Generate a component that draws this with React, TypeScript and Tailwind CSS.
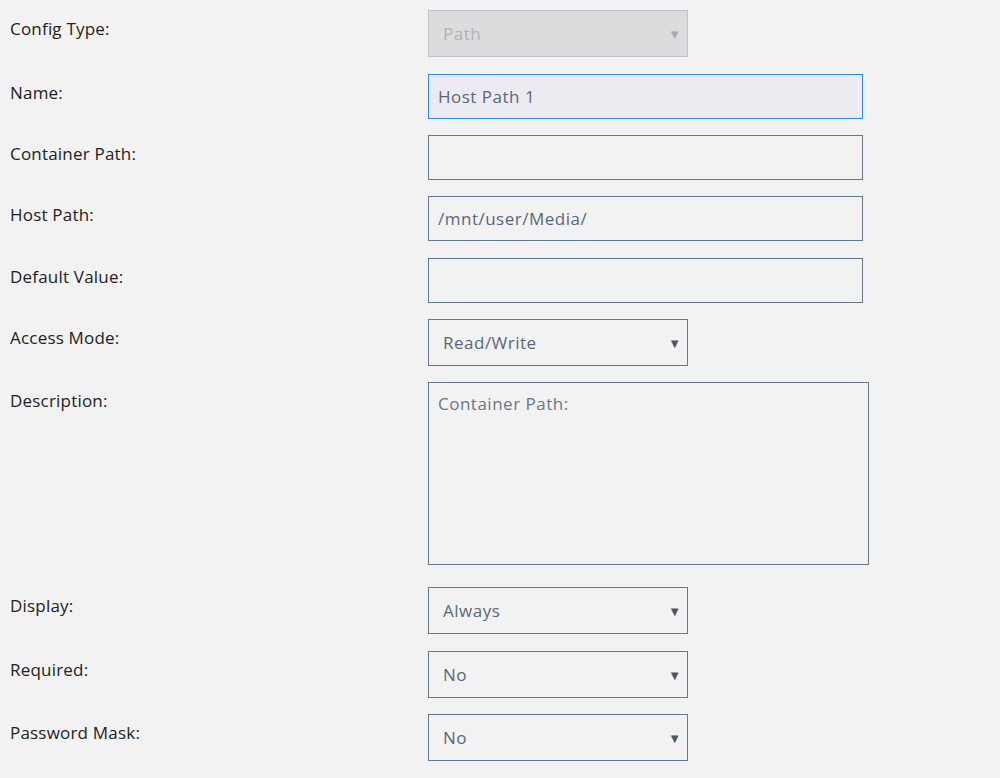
import React from 'react';

type Row = {
  label: string;
  kind: 'select' | 'input' | 'textarea';
  value?: string;
  placeholder?: string;
  disabled?: boolean;
  focused?: boolean;
  mt: string;
};

const rows: Row[] = [
  { label: 'Config Type:', kind: 'select', value: 'Path', disabled: true, mt: 'mt-0' },
  { label: 'Name:', kind: 'input', value: 'Host Path 1', focused: true, mt: 'mt-[17px]' },
  { label: 'Container Path:', kind: 'input', value: '', mt: 'mt-[16px]' },
  { label: 'Host Path:', kind: 'input', value: '/mnt/user/Media/', mt: 'mt-[16px]' },
  { label: 'Default Value:', kind: 'input', value: '', mt: 'mt-[17px]' },
  { label: 'Access Mode:', kind: 'select', value: 'Read/Write', mt: 'mt-[16px]' },
  { label: 'Description:', kind: 'textarea', placeholder: 'Container Path:', mt: 'mt-[16px]' },
  { label: 'Display:', kind: 'select', value: 'Always', mt: 'mt-[22px]' },
  { label: 'Required:', kind: 'select', value: 'No', mt: 'mt-[17px]' },
  { label: 'Password Mask:', kind: 'select', value: 'No', mt: 'mt-[16px]' },
];

// caja de select con flechita
const SelectBox = ({ value, disabled }: { value: string; disabled?: boolean }) => (
  <div
    className={`flex items-center justify-between w-[260px] h-[47px] pl-[14px] pr-[6px] border ${
      disabled ? 'bg-[#dcdcde] border-[#c3c3c5] text-[#b3b3b5]' : 'bg-[#f2f2f2] border-[#68788b] text-[#5a6878]'
    }`}
  >
    <span className="tracking-[0.5px]">{value}</span>
    <span className={`text-[13px] ${disabled ? 'text-[#a9aaae]' : 'text-[#4d5867]'}`}>▼</span>
  </div>
);

const InputBox = ({ value, focused }: { value: string; focused?: boolean }) => (
  <div
    className={`flex items-center w-[435px] h-[45px] pl-[9px] border tracking-[0.5px] ${
      focused ? 'bg-[#ecebf1] border-[#2f8ae0]' : 'bg-[#f2f2f2] border-[#68788b]'
    } text-[#5a6878]`}
  >
    {value}
  </div>
);

const TextareaBox = ({ placeholder }: { placeholder: string }) => (
  <div className="w-[441px] h-[183px] pl-[9px] pt-[9px] border border-[#68788b] text-[#6a7888] tracking-[0.5px]">
    {placeholder}
  </div>
);

export default function App() {
  return (
    <div
      className="min-h-[778px] w-[1000px] pt-[10px] bg-[#f2f2f2] text-[17px] leading-[24px]"
      style={{ fontFamily: '"Open Sans", "Noto Sans", sans-serif' }}
    >
      {rows.map((r) => (
        <div key={r.label} className={`flex ${r.mt}`}>
          <div className="w-[428px] pl-[10px] pt-[7px] text-[#222] tracking-[0.2px]">{r.label}</div>
          {r.kind === 'select' && <SelectBox value={r.value ?? ''} disabled={r.disabled} />}
          {r.kind === 'input' && <InputBox value={r.value ?? ''} focused={r.focused} />}
          {r.kind === 'textarea' && <TextareaBox placeholder={r.placeholder ?? ''} />}
        </div>
      ))}
    </div>
  );
}
